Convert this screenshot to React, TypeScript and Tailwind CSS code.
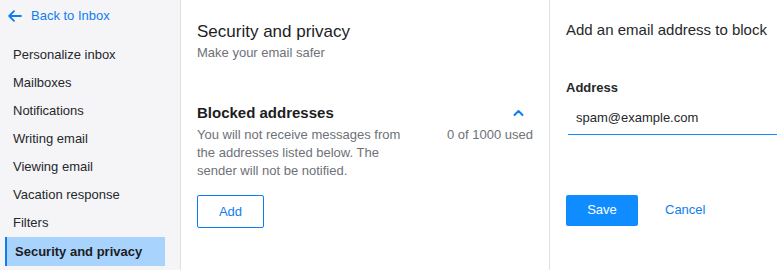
import React from "react";

const items = [
  "Personalize inbox",
  "Mailboxes",
  "Notifications",
  "Writing email",
  "Viewing email",
  "Vacation response",
  "Filters",
];

const App: React.FC = () => {
  return (
    <div
      className="flex h-[270px] w-[777px] overflow-hidden bg-white text-[13px] text-[#26282a]"
      style={{ fontFamily: '"Helvetica Neue", "Liberation Sans", Arial, sans-serif' }}
    >
      <aside className="w-[181px] shrink-0 border-r border-[#e0e0e3] bg-[#f5f5f8] pt-[6px]">
        <button className="flex h-[20px] items-center pl-[8px] text-[13px] font-medium text-[#0f7df0]">
          <svg width="14" height="12" viewBox="0 0 14 12" fill="none" stroke="#0f7df0" strokeWidth="1.8" strokeLinecap="round" strokeLinejoin="round">
            <path d="M13 6H1.5M6 1.2L1.2 6 6 10.8" />
          </svg>
          <span className="ml-[9px]">Back to Inbox</span>
        </button>
        <nav className="mt-[15px] flex flex-col">
          {items.map(item => (
            <div key={item} className="flex h-[28px] items-center pl-[13px]">
              {item}
            </div>
          ))}
          <div className="ml-[5px] flex h-[29px] w-[160px] items-center border-l-2 border-[#0f7df0] bg-[#a7d3fd] pl-[8px] font-bold text-[#1d1d1f]">
            Security and privacy
          </div>
        </nav>
      </aside>

      <main className="w-[369px] shrink-0 border-r border-[#e0e0e3] px-[16px] pt-[21px]">
        <h1 className="text-[17px] leading-[22px] text-[#1d1d1f]">Security and privacy</h1>
        <p className="mt-[2px] text-[13px] leading-[16px] text-[#6e7178]">Make your email safer</p>

        <div className="mt-[41px] flex items-center justify-between">
          <h2 className="text-[15px] font-bold leading-[22px] text-[#1d1d1f]">Blocked addresses</h2>
          <svg className="mr-[9px]" width="11" height="8" viewBox="0 0 11 8" fill="none" stroke="#0f7df0" strokeWidth="2" strokeLinecap="round" strokeLinejoin="round">
            <path d="M1.5 6L5.5 2 9.5 6" />
          </svg>
        </div>
        <div className="mt-[2px] flex justify-between text-[13px] leading-[18px] text-[#6e7178]">
          <p className="w-[210px]">
            You will not receive messages from the addresses listed below. The sender will not be notified.
          </p>
          <span>0 of 1000 used</span>
        </div>
        <button className="mt-[15px] h-[33px] w-[67px] rounded-[2px] border border-[#0f7df0] text-[13px] font-medium text-[#0f7df0]">
          Add
        </button>
      </main>

      <section className="flex-1 pl-[16px] pt-[20px]">
        <h2 className="text-[15px] leading-[20px] text-[#26282a]">Add an email address to block</h2>
        <label className="mt-[38px] block text-[13px] font-bold text-[#26282a]">Address</label>
        <div className="ml-[2px] mt-[7px] h-[30px] border-b border-[#0f8cff] pl-[8px] pt-[3px] text-[13px] text-[#26282a]">
          spam@example.com
        </div>
        <div className="mt-[60px] flex items-center">
          <button className="h-[31px] w-[72px] rounded-[2px] bg-[#0f8cff] text-[13px] font-medium text-white">
            Save
          </button>
          <button className="ml-[27px] text-[13px] text-[#0f7df0]">Cancel</button>
        </div>
      </section>
    </div>
  );
};

export default App;
